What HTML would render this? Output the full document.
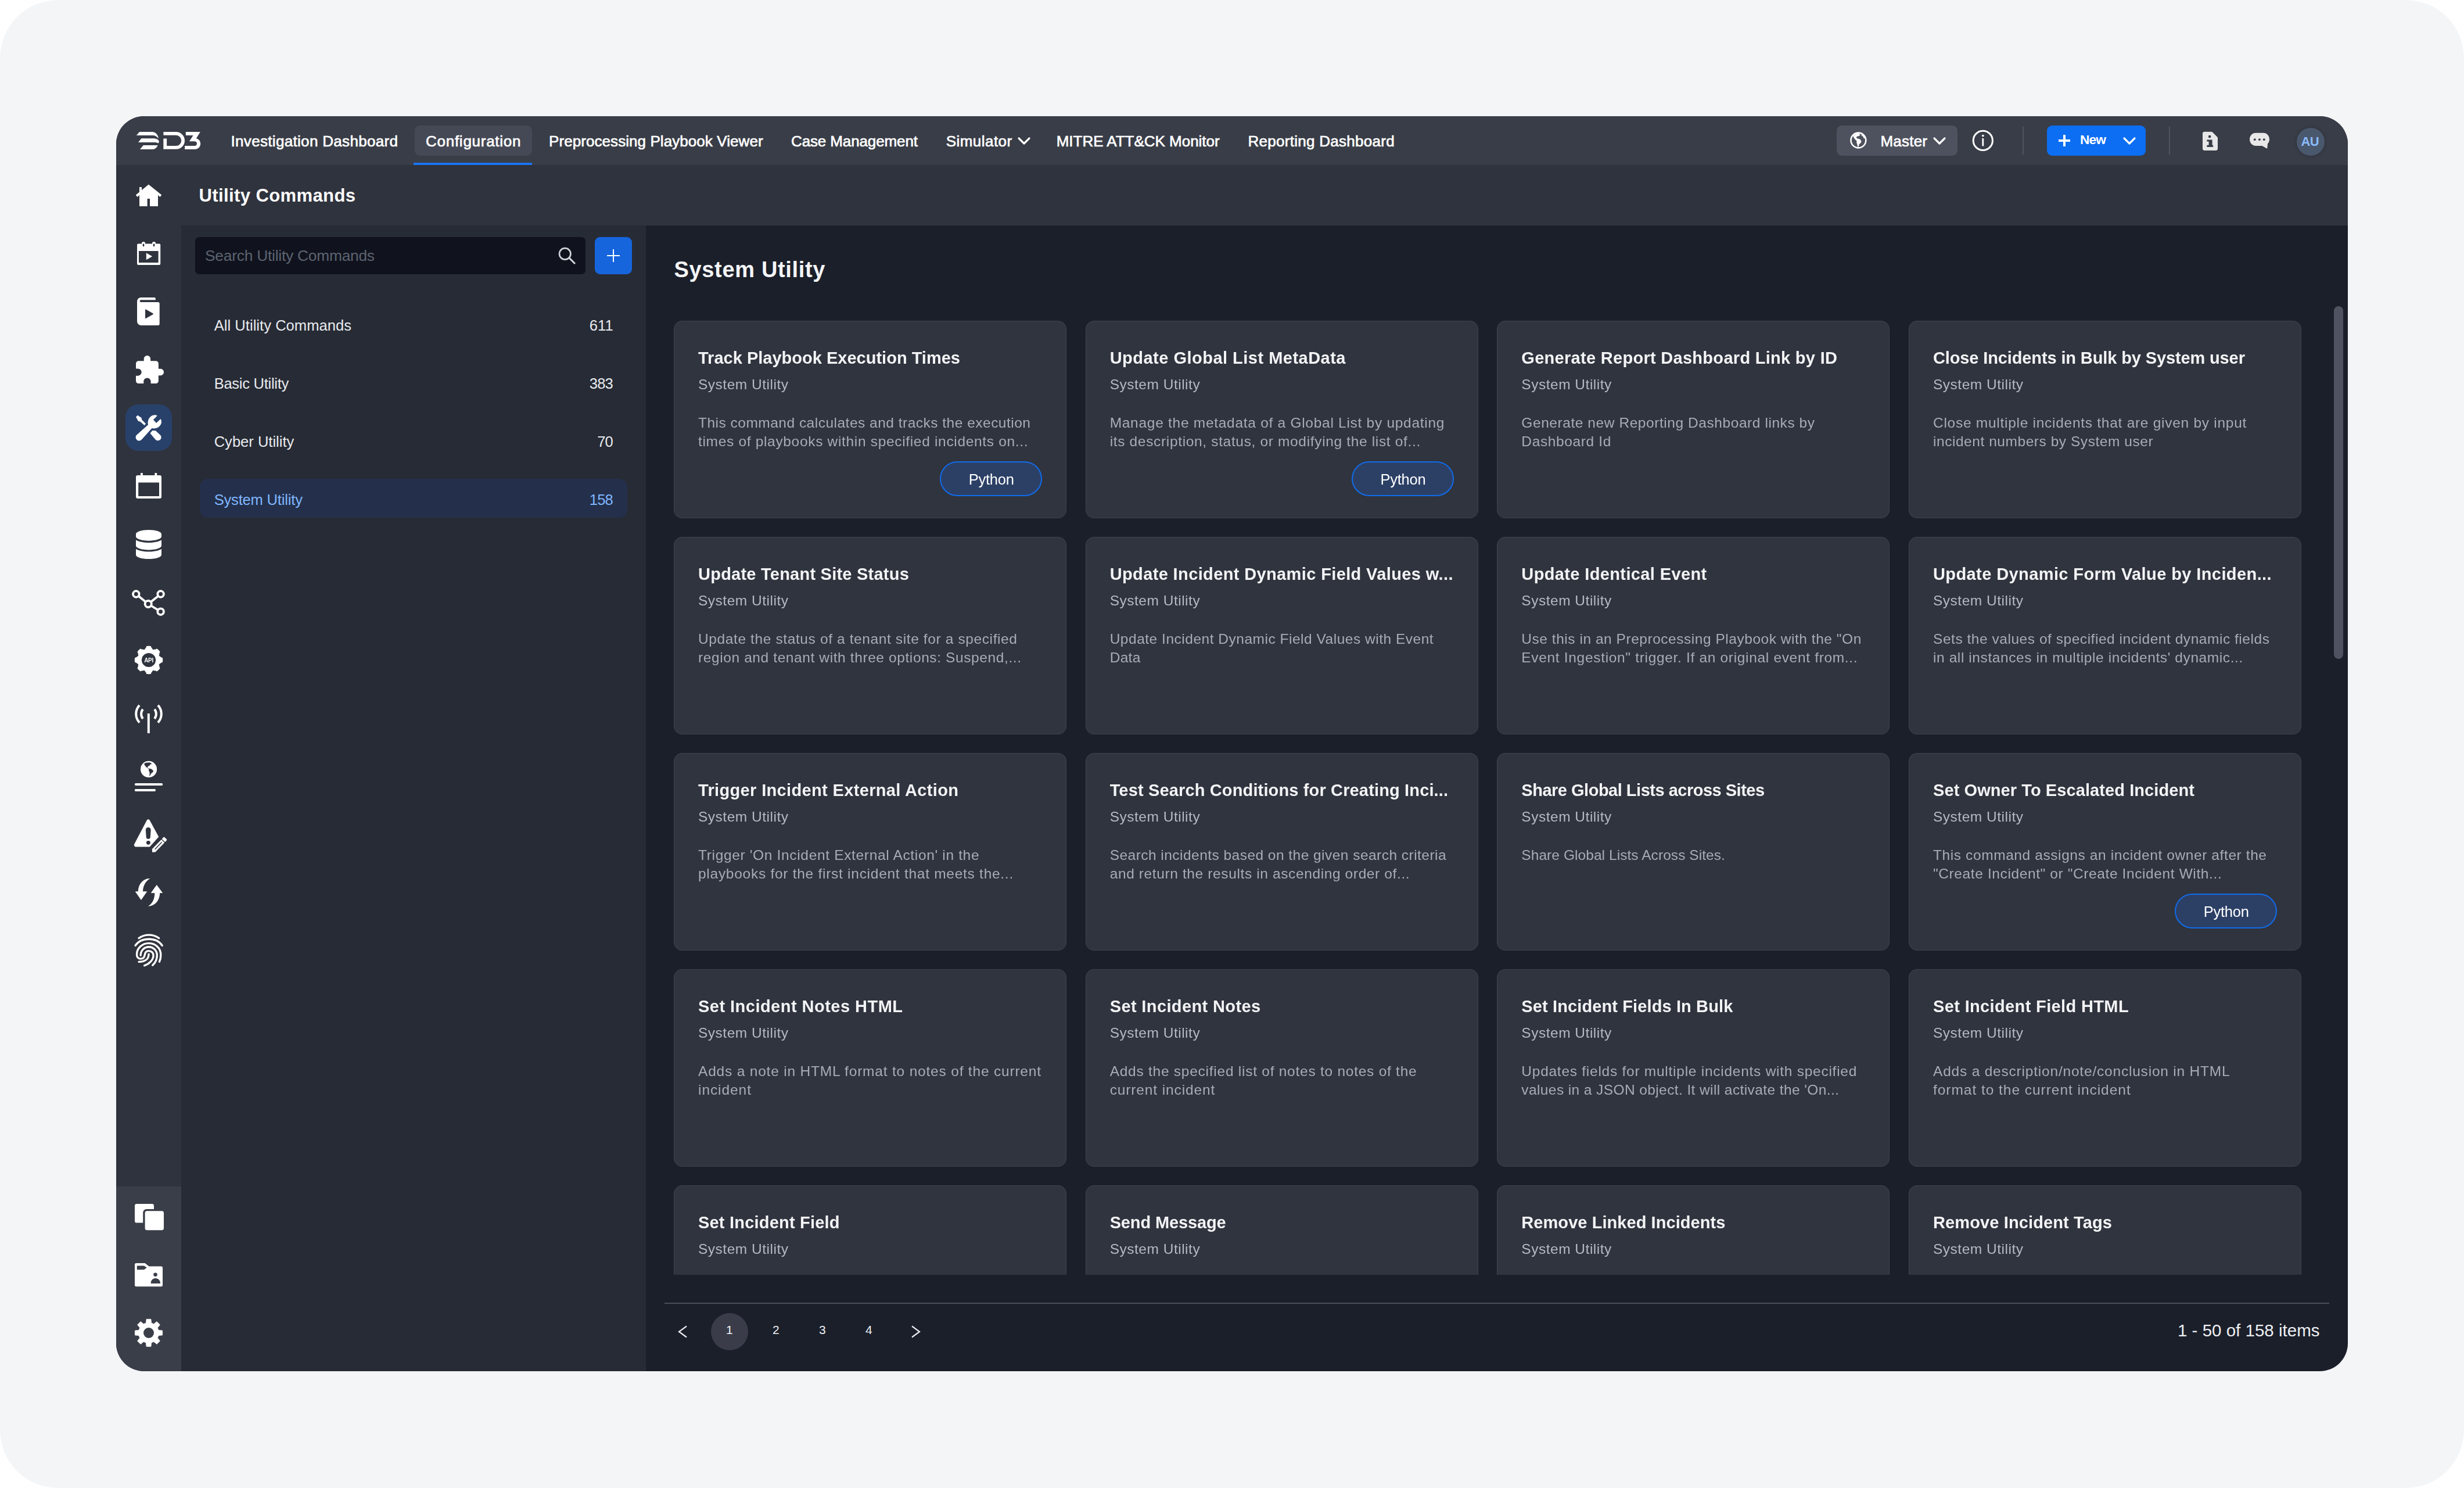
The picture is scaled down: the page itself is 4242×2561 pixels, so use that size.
<!DOCTYPE html>
<html lang="en"><head><meta charset="utf-8"><title>Utility Commands</title>
<style>
html,body{margin:0;padding:0;background:#fff;}
body{width:4242px;height:2561px;position:relative;overflow:hidden;font-family:"Liberation Sans", Arial, sans-serif;}
.page{position:absolute;left:0;top:0;width:4242px;height:2561px;background:#f4f5f7;border-radius:100px;}
.app{position:absolute;left:0;top:0;width:4242px;height:2561px;background:#1b1f2a;clip-path:inset(200px 200px 201px 200px round 48px);}
.blk{position:absolute;}
.t{position:absolute;white-space:nowrap;font-family:"Liberation Sans", Arial, sans-serif;}
.sb{-webkit-text-stroke:0.7px currentColor;}
.card{position:absolute;width:676px;height:340px;box-sizing:border-box;border:1.5px solid #3f434e;border-radius:14px;background:#30343e;}
</style></head><body>
<div class="page"></div>
<div class="app">
<div class="blk" style="left:200px;top:200px;width:3842px;height:84px;background:#393d47"></div>
<div class="blk" style="left:200px;top:284px;width:112px;height:1758px;background:#2f333d"></div>
<div class="blk" style="left:200px;top:2042px;width:112px;height:318px;background:#3a3e48"></div>
<div class="blk" style="left:312px;top:284px;width:3730px;height:104px;background:#2f333d"></div>
<div class="blk" style="left:312px;top:388px;width:800px;height:1972px;background:#272b35"></div>
<div class="blk" style="left:714px;top:216px;width:202px;height:52px;border-radius:9px;background:#454955"></div>
<div class="blk" style="left:712px;top:280px;width:204px;height:4px;background:#1a73f0"></div>
<div class="t sb" style="left:397.5px;top:226.99px;font-size:26px;line-height:32px;color:#ffffff;font-weight:normal;letter-spacing:0.322px;">Investigation Dashboard</div>
<div class="t sb" style="left:733px;top:226.99px;font-size:26px;line-height:32px;color:#ffffff;font-weight:normal;letter-spacing:0.737px;">Configuration</div>
<div class="t sb" style="left:945px;top:226.99px;font-size:26px;line-height:32px;color:#ffffff;font-weight:normal;letter-spacing:0.071px;">Preprocessing Playbook Viewer</div>
<div class="t sb" style="left:1362px;top:226.99px;font-size:26px;line-height:32px;color:#ffffff;font-weight:normal;letter-spacing:-0.121px;">Case Management</div>
<div class="t sb" style="left:1628.7px;top:226.99px;font-size:26px;line-height:32px;color:#ffffff;font-weight:normal;letter-spacing:0.459px;">Simulator</div>
<div class="t sb" style="left:1818.7px;top:226.99px;font-size:26px;line-height:32px;color:#ffffff;font-weight:normal;letter-spacing:-0.012px;">MITRE ATT&amp;CK Monitor</div>
<div class="t sb" style="left:2148.4px;top:226.99px;font-size:26px;line-height:32px;color:#ffffff;font-weight:normal;letter-spacing:0.286px;">Reporting Dashboard</div>
<svg class="blk" style="left:1750px;top:232px" width="26" height="20" viewBox="0 0 26 20"><path d="M4 6 L13 15 L22 6" fill="none" stroke="#fff" stroke-width="3.2" stroke-linecap="round" stroke-linejoin="round"/></svg>
<div class="blk" style="left:3162px;top:216px;width:208px;height:52px;border-radius:9px;background:#4e525e"></div>
<div class="t sb" style="left:3237.5px;top:226.99px;font-size:26px;line-height:32px;color:#ffffff;font-weight:normal;letter-spacing:0.206px;">Master</div>
<svg class="blk" style="left:3326px;top:232px" width="26" height="20" viewBox="0 0 26 20"><path d="M4 6 L13 15 L22 6" fill="none" stroke="#fff" stroke-width="3.2" stroke-linecap="round" stroke-linejoin="round"/></svg>
<div class="blk" style="left:3482px;top:218px;width:2px;height:48px;background:#50545f"></div>
<div class="blk" style="left:3734px;top:218px;width:2px;height:48px;background:#50545f"></div>
<div class="blk" style="left:3524px;top:216px;width:170px;height:52px;border-radius:9px;background:#0c6ef2"></div>
<div class="blk" style="left:3544px;top:240.3px;width:19.5px;height:3.6px;background:#fff"></div>
<div class="blk" style="left:3552px;top:232.3px;width:3.6px;height:19.6px;background:#fff"></div>
<div class="t " style="left:3581px;top:226.12px;font-size:22.75px;line-height:28px;color:#ffffff;font-weight:bold;letter-spacing:-0.891px;">New</div>
<svg class="blk" style="left:3653px;top:232px" width="26" height="20" viewBox="0 0 26 20"><path d="M4 6 L13 15 L22 6" fill="none" stroke="#fff" stroke-width="3.2" stroke-linecap="round" stroke-linejoin="round"/></svg>
<div class="blk" style="left:3954px;top:220px;width:48px;height:48px;border-radius:50%;background:#4a586e;box-shadow:0 0 7px rgba(0,0,0,0.22)"></div>
<div class="t " style="left:3961.6px;top:230.38px;font-size:22px;line-height:28px;color:#8bbdff;font-weight:bold;letter-spacing:-0.781px;">AU</div>
<div class="t " style="left:342.5px;top:317.26px;font-size:31px;line-height:39px;color:#ffffff;font-weight:bold;letter-spacing:0.398px;">Utility Commands</div>
<div class="blk" style="left:336px;top:408px;width:672px;height:64px;border-radius:7px;background:#10131e"></div>
<div class="t " style="left:353px;top:424.40px;font-size:26.25px;line-height:33px;color:#5d6370;font-weight:normal;letter-spacing:-0.188px;">Search Utility Commands</div>
<div class="blk" style="left:1024px;top:408px;width:64px;height:64px;border-radius:9px;background:#1665dd"></div>
<div class="blk" style="left:1045px;top:438.7px;width:22px;height:2.6px;background:#fff"></div>
<div class="blk" style="left:1054.7px;top:429px;width:2.6px;height:22px;background:#fff"></div>
<div class="blk" style="left:344px;top:824px;width:736px;height:67px;border-radius:14px;background:#24304b"></div>
<div class="t " style="left:368.7px;top:543.66px;font-size:25.5px;line-height:32px;color:#e9ebef;font-weight:normal;letter-spacing:0.052px;">All Utility Commands</div>
<div class="t " style="left:1014.8000000000001px;top:543.66px;font-size:25.5px;line-height:32px;color:#e9ebef;font-weight:normal;letter-spacing:0.122px;">611</div>
<div class="t " style="left:368.7px;top:643.66px;font-size:25.5px;line-height:32px;color:#e9ebef;font-weight:normal;letter-spacing:-0.265px;">Basic Utility</div>
<div class="t " style="left:1014.8000000000001px;top:643.66px;font-size:25.5px;line-height:32px;color:#e9ebef;font-weight:normal;letter-spacing:-0.823px;">383</div>
<div class="t " style="left:368.7px;top:743.66px;font-size:25.5px;line-height:32px;color:#e9ebef;font-weight:normal;letter-spacing:0.014px;">Cyber Utility</div>
<div class="t " style="left:1028.2px;top:743.66px;font-size:25.5px;line-height:32px;color:#e9ebef;font-weight:normal;letter-spacing:-0.875px;">70</div>
<div class="t " style="left:368.7px;top:843.66px;font-size:25.5px;line-height:32px;color:#7fb6ff;font-weight:normal;letter-spacing:-0.172px;">System Utility</div>
<div class="t " style="left:1014.8000000000001px;top:843.66px;font-size:25.5px;line-height:32px;color:#7fb6ff;font-weight:normal;letter-spacing:-0.823px;">158</div>
<div class="t " style="left:1160.5px;top:440.33px;font-size:38px;line-height:48px;color:#f4f5f7;font-weight:bold;letter-spacing:0.668px;">System Utility</div>
<div class="blk" style="left:1112px;top:520px;width:2930px;height:1674px;overflow:hidden;will-change:transform"><div style="position:absolute;left:-1112px;top:-520px;width:4242px;height:2561px">
<div class="card" style="left:1160.0px;top:552px"></div>
<div class="t ct" style="left:1202.0px;top:597.95px;font-size:29px;line-height:36px;color:#f3f4f6;font-weight:bold;letter-spacing:0.008px;">Track Playbook Execution Times</div>
<div class="t " style="left:1202.0px;top:645.51px;font-size:24.5px;line-height:31px;color:#b5b9c3;font-weight:normal;letter-spacing:0.508px;">System Utility</div>
<div class="t " style="left:1202.0px;top:712.01px;font-size:24.5px;line-height:31px;color:#a8acb7;font-weight:normal;letter-spacing:0.493px;">This command calculates and tracks the execution</div>
<div class="t " style="left:1202.0px;top:744.01px;font-size:24.5px;line-height:31px;color:#a8acb7;font-weight:normal;letter-spacing:0.675px;">times of playbooks within specified incidents on...</div>
<div class="blk" style="left:1618.0px;top:794px;width:176px;height:60px;border-radius:30px;background:#2c4066;border:2px solid #106cec;box-sizing:border-box"></div>
<div class="t " style="left:1667.8px;top:809.36px;font-size:25.5px;line-height:32px;color:#ffffff;font-weight:normal;letter-spacing:-0.258px;">Python</div>
<div class="card" style="left:1868.67px;top:552px"></div>
<div class="t ct" style="left:1910.67px;top:597.95px;font-size:29px;line-height:36px;color:#f3f4f6;font-weight:bold;letter-spacing:0.486px;">Update Global List MetaData</div>
<div class="t " style="left:1910.67px;top:645.51px;font-size:24.5px;line-height:31px;color:#b5b9c3;font-weight:normal;letter-spacing:0.508px;">System Utility</div>
<div class="t " style="left:1910.67px;top:712.01px;font-size:24.5px;line-height:31px;color:#a8acb7;font-weight:normal;letter-spacing:0.717px;">Manage the metadata of a Global List by updating</div>
<div class="t " style="left:1910.67px;top:744.01px;font-size:24.5px;line-height:31px;color:#a8acb7;font-weight:normal;letter-spacing:0.657px;">its description, status, or modifying the list of...</div>
<div class="blk" style="left:2326.67px;top:794px;width:176px;height:60px;border-radius:30px;background:#2c4066;border:2px solid #106cec;box-sizing:border-box"></div>
<div class="t " style="left:2376.4700000000003px;top:809.36px;font-size:25.5px;line-height:32px;color:#ffffff;font-weight:normal;letter-spacing:-0.258px;">Python</div>
<div class="card" style="left:2577.34px;top:552px"></div>
<div class="t ct" style="left:2619.34px;top:597.95px;font-size:29px;line-height:36px;color:#f3f4f6;font-weight:bold;letter-spacing:0.292px;">Generate Report Dashboard Link by ID</div>
<div class="t " style="left:2619.34px;top:645.51px;font-size:24.5px;line-height:31px;color:#b5b9c3;font-weight:normal;letter-spacing:0.508px;">System Utility</div>
<div class="t " style="left:2619.34px;top:712.01px;font-size:24.5px;line-height:31px;color:#a8acb7;font-weight:normal;letter-spacing:0.565px;">Generate new Reporting Dashboard links by</div>
<div class="t " style="left:2619.34px;top:744.01px;font-size:24.5px;line-height:31px;color:#a8acb7;font-weight:normal;letter-spacing:0.626px;">Dashboard Id</div>
<div class="card" style="left:3286.0099999999998px;top:552px"></div>
<div class="t ct" style="left:3328.0099999999998px;top:597.95px;font-size:29px;line-height:36px;color:#f3f4f6;font-weight:bold;letter-spacing:-0.124px;">Close Incidents in Bulk by System user</div>
<div class="t " style="left:3328.0099999999998px;top:645.51px;font-size:24.5px;line-height:31px;color:#b5b9c3;font-weight:normal;letter-spacing:0.508px;">System Utility</div>
<div class="t " style="left:3328.0099999999998px;top:712.01px;font-size:24.5px;line-height:31px;color:#a8acb7;font-weight:normal;letter-spacing:0.726px;">Close multiple incidents that are given by input</div>
<div class="t " style="left:3328.0099999999998px;top:744.01px;font-size:24.5px;line-height:31px;color:#a8acb7;font-weight:normal;letter-spacing:0.546px;">incident numbers by System user</div>
<div class="card" style="left:1160.0px;top:924px"></div>
<div class="t ct" style="left:1202.0px;top:969.95px;font-size:29px;line-height:36px;color:#f3f4f6;font-weight:bold;letter-spacing:0.234px;">Update Tenant Site Status</div>
<div class="t " style="left:1202.0px;top:1017.51px;font-size:24.5px;line-height:31px;color:#b5b9c3;font-weight:normal;letter-spacing:0.508px;">System Utility</div>
<div class="t " style="left:1202.0px;top:1084.01px;font-size:24.5px;line-height:31px;color:#a8acb7;font-weight:normal;letter-spacing:0.614px;">Update the status of a tenant site for a specified</div>
<div class="t " style="left:1202.0px;top:1116.01px;font-size:24.5px;line-height:31px;color:#a8acb7;font-weight:normal;letter-spacing:0.602px;">region and tenant with three options: Suspend,...</div>
<div class="card" style="left:1868.67px;top:924px"></div>
<div class="t ct" style="left:1910.67px;top:969.95px;font-size:29px;line-height:36px;color:#f3f4f6;font-weight:bold;letter-spacing:0.374px;">Update Incident Dynamic Field Values w...</div>
<div class="t " style="left:1910.67px;top:1017.51px;font-size:24.5px;line-height:31px;color:#b5b9c3;font-weight:normal;letter-spacing:0.508px;">System Utility</div>
<div class="t " style="left:1910.67px;top:1084.01px;font-size:24.5px;line-height:31px;color:#a8acb7;font-weight:normal;letter-spacing:0.514px;">Update Incident Dynamic Field Values with Event</div>
<div class="t " style="left:1910.67px;top:1116.01px;font-size:24.5px;line-height:31px;color:#a8acb7;font-weight:normal;letter-spacing:0.311px;">Data</div>
<div class="card" style="left:2577.34px;top:924px"></div>
<div class="t ct" style="left:2619.34px;top:969.95px;font-size:29px;line-height:36px;color:#f3f4f6;font-weight:bold;letter-spacing:0.371px;">Update Identical Event</div>
<div class="t " style="left:2619.34px;top:1017.51px;font-size:24.5px;line-height:31px;color:#b5b9c3;font-weight:normal;letter-spacing:0.508px;">System Utility</div>
<div class="t " style="left:2619.34px;top:1084.01px;font-size:24.5px;line-height:31px;color:#a8acb7;font-weight:normal;letter-spacing:0.533px;">Use this in an Preprocessing Playbook with the "On</div>
<div class="t " style="left:2619.34px;top:1116.01px;font-size:24.5px;line-height:31px;color:#a8acb7;font-weight:normal;letter-spacing:0.675px;">Event Ingestion" trigger. If an original event from...</div>
<div class="card" style="left:3286.0099999999998px;top:924px"></div>
<div class="t ct" style="left:3328.0099999999998px;top:969.95px;font-size:29px;line-height:36px;color:#f3f4f6;font-weight:bold;letter-spacing:0.404px;">Update Dynamic Form Value by Inciden...</div>
<div class="t " style="left:3328.0099999999998px;top:1017.51px;font-size:24.5px;line-height:31px;color:#b5b9c3;font-weight:normal;letter-spacing:0.508px;">System Utility</div>
<div class="t " style="left:3328.0099999999998px;top:1084.01px;font-size:24.5px;line-height:31px;color:#a8acb7;font-weight:normal;letter-spacing:0.536px;">Sets the values of specified incident dynamic fields</div>
<div class="t " style="left:3328.0099999999998px;top:1116.01px;font-size:24.5px;line-height:31px;color:#a8acb7;font-weight:normal;letter-spacing:0.589px;">in all instances in multiple incidents' dynamic...</div>
<div class="card" style="left:1160.0px;top:1296px"></div>
<div class="t ct" style="left:1202.0px;top:1341.95px;font-size:29px;line-height:36px;color:#f3f4f6;font-weight:bold;letter-spacing:0.347px;">Trigger Incident External Action</div>
<div class="t " style="left:1202.0px;top:1389.51px;font-size:24.5px;line-height:31px;color:#b5b9c3;font-weight:normal;letter-spacing:0.508px;">System Utility</div>
<div class="t " style="left:1202.0px;top:1456.01px;font-size:24.5px;line-height:31px;color:#a8acb7;font-weight:normal;letter-spacing:0.660px;">Trigger 'On Incident External Action' in the</div>
<div class="t " style="left:1202.0px;top:1488.01px;font-size:24.5px;line-height:31px;color:#a8acb7;font-weight:normal;letter-spacing:0.727px;">playbooks for the first incident that meets the...</div>
<div class="card" style="left:1868.67px;top:1296px"></div>
<div class="t ct" style="left:1910.67px;top:1341.95px;font-size:29px;line-height:36px;color:#f3f4f6;font-weight:bold;letter-spacing:0.145px;">Test Search Conditions for Creating Inci...</div>
<div class="t " style="left:1910.67px;top:1389.51px;font-size:24.5px;line-height:31px;color:#b5b9c3;font-weight:normal;letter-spacing:0.508px;">System Utility</div>
<div class="t " style="left:1910.67px;top:1456.01px;font-size:24.5px;line-height:31px;color:#a8acb7;font-weight:normal;letter-spacing:0.465px;">Search incidents based on the given search criteria</div>
<div class="t " style="left:1910.67px;top:1488.01px;font-size:24.5px;line-height:31px;color:#a8acb7;font-weight:normal;letter-spacing:0.618px;">and return the results in ascending order of...</div>
<div class="card" style="left:2577.34px;top:1296px"></div>
<div class="t ct" style="left:2619.34px;top:1341.95px;font-size:29px;line-height:36px;color:#f3f4f6;font-weight:bold;letter-spacing:-0.493px;">Share Global Lists across Sites</div>
<div class="t " style="left:2619.34px;top:1389.51px;font-size:24.5px;line-height:31px;color:#b5b9c3;font-weight:normal;letter-spacing:0.508px;">System Utility</div>
<div class="t " style="left:2619.34px;top:1456.01px;font-size:24.5px;line-height:31px;color:#a8acb7;font-weight:normal;letter-spacing:0.064px;">Share Global Lists Across Sites.</div>
<div class="card" style="left:3286.0099999999998px;top:1296px"></div>
<div class="t ct" style="left:3328.0099999999998px;top:1341.95px;font-size:29px;line-height:36px;color:#f3f4f6;font-weight:bold;letter-spacing:0.081px;">Set Owner To Escalated Incident</div>
<div class="t " style="left:3328.0099999999998px;top:1389.51px;font-size:24.5px;line-height:31px;color:#b5b9c3;font-weight:normal;letter-spacing:0.508px;">System Utility</div>
<div class="t " style="left:3328.0099999999998px;top:1456.01px;font-size:24.5px;line-height:31px;color:#a8acb7;font-weight:normal;letter-spacing:0.594px;">This command assigns an incident owner after the</div>
<div class="t " style="left:3328.0099999999998px;top:1488.01px;font-size:24.5px;line-height:31px;color:#a8acb7;font-weight:normal;letter-spacing:0.606px;">"Create Incident" or "Create Incident With...</div>
<div class="blk" style="left:3744.0099999999998px;top:1538px;width:176px;height:60px;border-radius:30px;background:#2c4066;border:2px solid #106cec;box-sizing:border-box"></div>
<div class="t " style="left:3793.81px;top:1553.36px;font-size:25.5px;line-height:32px;color:#ffffff;font-weight:normal;letter-spacing:-0.258px;">Python</div>
<div class="card" style="left:1160.0px;top:1668px"></div>
<div class="t ct" style="left:1202.0px;top:1713.95px;font-size:29px;line-height:36px;color:#f3f4f6;font-weight:bold;letter-spacing:0.474px;">Set Incident Notes HTML</div>
<div class="t " style="left:1202.0px;top:1761.51px;font-size:24.5px;line-height:31px;color:#b5b9c3;font-weight:normal;letter-spacing:0.508px;">System Utility</div>
<div class="t " style="left:1202.0px;top:1828.01px;font-size:24.5px;line-height:31px;color:#a8acb7;font-weight:normal;letter-spacing:0.804px;">Adds a note in HTML format to notes of the current</div>
<div class="t " style="left:1202.0px;top:1860.01px;font-size:24.5px;line-height:31px;color:#a8acb7;font-weight:normal;letter-spacing:0.935px;">incident</div>
<div class="card" style="left:1868.67px;top:1668px"></div>
<div class="t ct" style="left:1910.67px;top:1713.95px;font-size:29px;line-height:36px;color:#f3f4f6;font-weight:bold;letter-spacing:0.382px;">Set Incident Notes</div>
<div class="t " style="left:1910.67px;top:1761.51px;font-size:24.5px;line-height:31px;color:#b5b9c3;font-weight:normal;letter-spacing:0.508px;">System Utility</div>
<div class="t " style="left:1910.67px;top:1828.01px;font-size:24.5px;line-height:31px;color:#a8acb7;font-weight:normal;letter-spacing:0.744px;">Adds the specified list of notes to notes of the</div>
<div class="t " style="left:1910.67px;top:1860.01px;font-size:24.5px;line-height:31px;color:#a8acb7;font-weight:normal;letter-spacing:0.879px;">current incident</div>
<div class="card" style="left:2577.34px;top:1668px"></div>
<div class="t ct" style="left:2619.34px;top:1713.95px;font-size:29px;line-height:36px;color:#f3f4f6;font-weight:bold;letter-spacing:0.117px;">Set Incident Fields In Bulk</div>
<div class="t " style="left:2619.34px;top:1761.51px;font-size:24.5px;line-height:31px;color:#b5b9c3;font-weight:normal;letter-spacing:0.508px;">System Utility</div>
<div class="t " style="left:2619.34px;top:1828.01px;font-size:24.5px;line-height:31px;color:#a8acb7;font-weight:normal;letter-spacing:0.740px;">Updates fields for multiple incidents with specified</div>
<div class="t " style="left:2619.34px;top:1860.01px;font-size:24.5px;line-height:31px;color:#a8acb7;font-weight:normal;letter-spacing:0.400px;">values in a JSON object. It will activate the 'On...</div>
<div class="card" style="left:3286.0099999999998px;top:1668px"></div>
<div class="t ct" style="left:3328.0099999999998px;top:1713.95px;font-size:29px;line-height:36px;color:#f3f4f6;font-weight:bold;letter-spacing:0.360px;">Set Incident Field HTML</div>
<div class="t " style="left:3328.0099999999998px;top:1761.51px;font-size:24.5px;line-height:31px;color:#b5b9c3;font-weight:normal;letter-spacing:0.508px;">System Utility</div>
<div class="t " style="left:3328.0099999999998px;top:1828.01px;font-size:24.5px;line-height:31px;color:#a8acb7;font-weight:normal;letter-spacing:0.797px;">Adds a description/note/conclusion in HTML</div>
<div class="t " style="left:3328.0099999999998px;top:1860.01px;font-size:24.5px;line-height:31px;color:#a8acb7;font-weight:normal;letter-spacing:0.960px;">format to the current incident</div>
<div class="card" style="left:1160.0px;top:2040px"></div>
<div class="t ct" style="left:1202.0px;top:2085.95px;font-size:29px;line-height:36px;color:#f3f4f6;font-weight:bold;letter-spacing:0.200px;">Set Incident Field</div>
<div class="t " style="left:1202.0px;top:2133.51px;font-size:24.5px;line-height:31px;color:#b5b9c3;font-weight:normal;letter-spacing:0.508px;">System Utility</div>
<div class="card" style="left:1868.67px;top:2040px"></div>
<div class="t ct" style="left:1910.67px;top:2085.95px;font-size:29px;line-height:36px;color:#f3f4f6;font-weight:bold;letter-spacing:-0.135px;">Send Message</div>
<div class="t " style="left:1910.67px;top:2133.51px;font-size:24.5px;line-height:31px;color:#b5b9c3;font-weight:normal;letter-spacing:0.508px;">System Utility</div>
<div class="card" style="left:2577.34px;top:2040px"></div>
<div class="t ct" style="left:2619.34px;top:2085.95px;font-size:29px;line-height:36px;color:#f3f4f6;font-weight:bold;letter-spacing:0.059px;">Remove Linked Incidents</div>
<div class="t " style="left:2619.34px;top:2133.51px;font-size:24.5px;line-height:31px;color:#b5b9c3;font-weight:normal;letter-spacing:0.508px;">System Utility</div>
<div class="card" style="left:3286.0099999999998px;top:2040px"></div>
<div class="t ct" style="left:3328.0099999999998px;top:2085.95px;font-size:29px;line-height:36px;color:#f3f4f6;font-weight:bold;letter-spacing:0.123px;">Remove Incident Tags</div>
<div class="t " style="left:3328.0099999999998px;top:2133.51px;font-size:24.5px;line-height:31px;color:#b5b9c3;font-weight:normal;letter-spacing:0.508px;">System Utility</div>
</div></div>
<div class="blk" style="left:4018px;top:527px;width:16px;height:607px;border-radius:8px;background:#4f5361"></div>
<div class="blk" style="left:1144px;top:2242px;width:2866px;height:2px;background:#4a4e5b"></div>
<div class="blk" style="left:1224px;top:2259.5px;width:64px;height:64px;border-radius:50%;background:#3a3d49"></div>
<div class="t " style="left:1250px;top:2275.72px;font-size:21px;line-height:26px;color:#f0f1f4;font-weight:normal;letter-spacing:0px;">1</div>
<div class="t " style="left:1330px;top:2275.72px;font-size:21px;line-height:26px;color:#f0f1f4;font-weight:normal;letter-spacing:0px;">2</div>
<div class="t " style="left:1410px;top:2275.72px;font-size:21px;line-height:26px;color:#f0f1f4;font-weight:normal;letter-spacing:0px;">3</div>
<div class="t " style="left:1490px;top:2275.72px;font-size:21px;line-height:26px;color:#f0f1f4;font-weight:normal;letter-spacing:0px;">4</div>
<svg class="blk" style="left:1160px;top:2276px" width="32" height="32" viewBox="0 0 32 32"><path d="M22 6.5 L9 16 L22 25.5" fill="none" stroke="#e9ebef" stroke-width="2.2" stroke-linejoin="miter"/></svg>
<svg class="blk" style="left:1560px;top:2276px" width="32" height="32" viewBox="0 0 32 32"><path d="M10 6.5 L23 16 L10 25.5" fill="none" stroke="#e9ebef" stroke-width="2.2" stroke-linejoin="miter"/></svg>
<div class="t " style="left:3749px;top:2271.28px;font-size:29.5px;line-height:37px;color:#eef0f3;font-weight:normal;letter-spacing:0.010px;">1 - 50 of 158 items</div>
<svg class="blk" style="left:0;top:0" width="4242" height="2561" viewBox="0 0 4242 2561">
<g transform="translate(220,210) scale(0.06088)" fill="#ffffff">
<path d="M245,378 L330,278 L690,278 C790,278 860,370 872,470 C830,410 770,378 700,378 Z"/>
<path d="M295,575 L385,465 L720,465 C800,465 870,500 882,540 C882,565 875,585 865,600 C840,585 800,575 760,575 Z"/>
<path d="M345,772 L440,655 L848,655 C820,720 770,772 690,772 Z"/>
<path d="M1008,328 H1365 A197,197 0 0 1 1365,722 H1055 V470" fill="none" stroke="#ffffff" stroke-width="95"/>
<path d="M1640,278 L2050,278 L1935,462 C2010,480 2056,540 2056,612 C2056,700 1990,772 1890,772 L1612,772 L1612,675 L1880,675 C1925,675 1955,648 1955,610 C1955,572 1925,545 1880,545 L1740,545 L1850,378 L1640,378 Z"/>
</g>
<path fill="#ffffff" d="M255.8,317.4 L278.2,335.6 L275.6,339 L272,336.1 V355 H258 V342 H253.6 V355 H240 V336.1 L236.4,339 L233.8,335.6 L240,330.5 V322 H244 V327.2 Z"/>
<rect x="236" y="419.4" width="40.2" height="36.6" rx="2" fill="#ffffff"/>
<rect x="244" y="416" width="6" height="10" rx="3" fill="#ffffff"/><rect x="262" y="416" width="6" height="10" rx="3" fill="#ffffff"/>
<rect x="245.7" y="419.6" width="2.6" height="4.6" rx="1.3" fill="#2f333d"/><rect x="263.7" y="419.6" width="2.6" height="4.6" rx="1.3" fill="#2f333d"/>
<rect x="239" y="432" width="33.6" height="20" fill="#2f333d"/>
<path fill="#ffffff" d="M251.8,435.2 L262.2,441.2 L251.8,447.2Z"/>
<path fill="#ffffff" d="M242.5,512 H266 a1.8,1.8 0 0 1 1.8,1.8 V516.2 H242.5 a1.9,1.9 0 0 0 0,3.8 H272 a2.7,2.7 0 0 1 2.7,2.7 V557.3 a2.7,2.7 0 0 1 -2.7,2.7 H243 a7,7 0 0 1 -7,-7 V518.5 a6.5,6.5 0 0 1 6.5,-6.5Z"/>
<path fill="#2f333d" stroke="#2f333d" stroke-width="1.6" stroke-linejoin="round" d="M250.8,533.3 L263.2,540.3 L250.8,547.3Z"/>
<g transform="translate(229.43,609.71) scale(2.2857)"><path fill="#ffffff" d="M20.5 11H19V7c0-1.1-.9-2-2-2h-4V3.5C13 2.12 11.88 1 10.5 1S8 2.12 8 3.5V5H4c-1.1 0-1.99.9-1.99 2v3.8H3.5c1.49 0 2.7 1.21 2.7 2.7s-1.21 2.7-2.7 2.7H2V20c0 1.1.9 2 2 2h3.8v-1.5c0-1.49 1.21-2.7 2.7-2.7 1.49 0 2.7 1.21 2.7 2.7V22H17c1.1 0 2-.9 2-2v-4h1.5c1.38 0 2.5-1.12 2.5-2.5S21.88 11 20.5 11z"/></g>
<rect x="216" y="696" width="80" height="80" rx="22" fill="#28416b"/>
<g transform="translate(226,706) scale(0.040323)" fill="#ffffff">
<path d="M1110,235 L940,410 L1070,545 L1255,375 C1310,480 1300,600 1200,690 C1110,775 980,800 880,770 L440,1260 C380,1320 280,1320 225,1250 C170,1180 180,1100 240,1050 L720,620 C690,500 720,370 820,280 C900,205 1020,180 1110,235 Z"/>
<path d="M198,288 L272,220 L440,330 L447,400 L622,578 L560,645 L378,482 L300,470 Z"/>
<path d="M900,870 L1040,875 L1240,1060 C1300,1130 1290,1220 1220,1270 C1150,1320 1070,1300 1020,1240 L805,985 Z"/>
</g>
<rect x="234" y="818" width="44" height="40" rx="3" fill="#ffffff"/>
<rect x="242" y="814" width="3.8" height="6" fill="#ffffff"/><rect x="266.4" y="814" width="3.8" height="6" fill="#ffffff"/>
<rect x="238.2" y="830.5" width="35.8" height="23.5" fill="#2f333d"/>
<g transform="translate(234,912) scale(0.0982,0.0977)"><path fill="#ffffff" d="M448 73.143v45.714C448 159.143 347.667 192 224 192S0 159.143 0 118.857V73.143C0 32.857 100.333 0 224 0s224 32.857 224 73.143zM448 176v102.857C448 319.143 347.667 352 224 352S0 319.143 0 278.857V176c48.125 33.143 136.208 48.572 224 48.572S399.874 209.143 448 176zm0 160v102.857C448 479.143 347.667 512 224 512S0 479.143 0 438.857V336c48.125 33.143 136.208 48.572 224 48.572S399.874 369.143 448 336z"/></g>
<g stroke="#ffffff" stroke-width="3.8" fill="#2f333d"><path d="M234.3,1022.5 L255.2,1039.5 L276.6,1022.5 M255.2,1039.5 L276.6,1052.7" fill="none"/><circle cx="234.3" cy="1022.5" r="5.3"/><circle cx="276.6" cy="1022.5" r="5.3"/><circle cx="255.2" cy="1039.5" r="5.6"/><circle cx="276.6" cy="1052.7" r="5.3"/></g>
<path fill="#ffffff" d="M248.58,1118.08 L249.03,1117.75 L249.42,1117.20 L249.79,1116.53 L250.19,1115.84 L250.66,1115.28 L251.20,1114.95 L251.59,1113.82 L251.99,1112.42 L252.62,1112.04 L253.29,1111.95 L253.97,1111.89 L254.64,1111.84 L255.32,1111.81 L256.00,1111.80 L256.68,1111.81 L257.36,1111.84 L258.03,1111.89 L258.71,1111.95 L259.38,1112.04 L260.01,1112.42 L260.41,1113.82 L260.80,1114.95 L261.34,1115.28 L261.81,1115.84 L262.21,1116.53 L262.58,1117.20 L262.97,1117.75 L263.42,1118.08 L263.98,1118.17 L264.64,1118.06 L265.38,1117.84 L266.15,1117.64 L266.87,1117.57 L267.49,1117.72 L268.56,1117.20 L269.84,1116.49 L270.55,1116.66 L271.09,1117.08 L271.61,1117.51 L272.13,1117.96 L272.63,1118.41 L273.11,1118.89 L273.59,1119.37 L274.04,1119.87 L274.49,1120.39 L274.92,1120.91 L275.34,1121.45 L275.51,1122.16 L274.80,1123.44 L274.28,1124.51 L274.43,1125.13 L274.36,1125.85 L274.16,1126.62 L273.94,1127.36 L273.83,1128.02 L273.92,1128.58 L274.25,1129.03 L274.80,1129.42 L275.47,1129.79 L276.16,1130.19 L276.72,1130.66 L277.05,1131.20 L278.18,1131.59 L279.58,1131.99 L279.96,1132.62 L280.05,1133.29 L280.11,1133.97 L280.16,1134.64 L280.19,1135.32 L280.20,1136.00 L280.19,1136.68 L280.16,1137.36 L280.11,1138.03 L280.05,1138.71 L279.96,1139.38 L279.58,1140.01 L278.18,1140.41 L277.05,1140.80 L276.72,1141.34 L276.16,1141.81 L275.47,1142.21 L274.80,1142.58 L274.25,1142.97 L273.92,1143.42 L273.83,1143.98 L273.94,1144.64 L274.16,1145.38 L274.36,1146.15 L274.43,1146.87 L274.28,1147.49 L274.80,1148.56 L275.51,1149.84 L275.34,1150.55 L274.92,1151.09 L274.49,1151.61 L274.04,1152.13 L273.59,1152.63 L273.11,1153.11 L272.63,1153.59 L272.13,1154.04 L271.61,1154.49 L271.09,1154.92 L270.55,1155.34 L269.84,1155.51 L268.56,1154.80 L267.49,1154.28 L266.87,1154.43 L266.15,1154.36 L265.38,1154.16 L264.64,1153.94 L263.98,1153.83 L263.42,1153.92 L262.97,1154.25 L262.58,1154.80 L262.21,1155.47 L261.81,1156.16 L261.34,1156.72 L260.80,1157.05 L260.41,1158.18 L260.01,1159.58 L259.38,1159.96 L258.71,1160.05 L258.03,1160.11 L257.36,1160.16 L256.68,1160.19 L256.00,1160.20 L255.32,1160.19 L254.64,1160.16 L253.97,1160.11 L253.29,1160.05 L252.62,1159.96 L251.99,1159.58 L251.59,1158.18 L251.20,1157.05 L250.66,1156.72 L250.19,1156.16 L249.79,1155.47 L249.42,1154.80 L249.03,1154.25 L248.58,1153.92 L248.02,1153.83 L247.36,1153.94 L246.62,1154.16 L245.85,1154.36 L245.13,1154.43 L244.51,1154.28 L243.44,1154.80 L242.16,1155.51 L241.45,1155.34 L240.91,1154.92 L240.39,1154.49 L239.87,1154.04 L239.37,1153.59 L238.89,1153.11 L238.41,1152.63 L237.96,1152.13 L237.51,1151.61 L237.08,1151.09 L236.66,1150.55 L236.49,1149.84 L237.20,1148.56 L237.72,1147.49 L237.57,1146.87 L237.64,1146.15 L237.84,1145.38 L238.06,1144.64 L238.17,1143.98 L238.08,1143.42 L237.75,1142.97 L237.20,1142.58 L236.53,1142.21 L235.84,1141.81 L235.28,1141.34 L234.95,1140.80 L233.82,1140.41 L232.42,1140.01 L232.04,1139.38 L231.95,1138.71 L231.89,1138.03 L231.84,1137.36 L231.81,1136.68 L231.80,1136.00 L231.81,1135.32 L231.84,1134.64 L231.89,1133.97 L231.95,1133.29 L232.04,1132.62 L232.42,1131.99 L233.82,1131.59 L234.95,1131.20 L235.28,1130.66 L235.84,1130.19 L236.53,1129.79 L237.20,1129.42 L237.75,1129.03 L238.08,1128.58 L238.17,1128.02 L238.06,1127.36 L237.84,1126.62 L237.64,1125.85 L237.57,1125.13 L237.72,1124.51 L237.20,1123.44 L236.49,1122.16 L236.66,1121.45 L237.08,1120.91 L237.51,1120.39 L237.96,1119.87 L238.41,1119.37 L238.89,1118.89 L239.37,1118.41 L239.87,1117.96 L240.39,1117.51 L240.91,1117.08 L241.45,1116.66 L242.16,1116.49 L243.44,1117.20 L244.51,1117.72 L245.13,1117.57 L245.85,1117.64 L246.62,1117.84 L247.36,1118.06 L248.02,1118.17Z"/>
<circle cx="256" cy="1136" r="12.1" fill="#2f333d"/>
<text x="256.1" y="1139.8" text-anchor="middle" font-family="Liberation Sans, Arial, sans-serif" font-weight="bold" font-size="10" letter-spacing="-0.25" fill="#ffffff">API</text>
<g fill="none" stroke="#ffffff" stroke-width="4"><path d="M240.06,1243.67 A21.8,21.8 0 0 1 240.06,1213.93"/><path d="M271.94,1213.93 A21.8,21.8 0 0 1 271.94,1243.67"/><path d="M245.97,1236.92 A12.9,12.9 0 0 1 245.97,1220.68"/><path d="M266.03,1220.68 A12.9,12.9 0 0 1 266.03,1236.92"/><path d="M255.8,1228 V1262"/></g>
<circle cx="256.04" cy="1323.96" r="14.1" fill="#ffffff"/>
<g transform="translate(226,1304) scale(0.040323)" fill="#2f333d">
<path d="M545,265 C570,235 600,220 625,214 L760,205 C800,210 830,220 852,236 L866,292 L822,274 L792,330 L742,355 L702,385 L694,428 L760,468 L842,480 L915,530 L941,575 L926,620 L872,650 L836,700 L796,776 L770,770 L790,682 L776,620 L746,552 L752,486 L690,440 L655,416 L590,345 Z"/>
</g>
<rect x="231.8" y="1348" width="48.4" height="4" rx="2" fill="#ffffff"/><rect x="231.8" y="1358" width="36.3" height="4" rx="2" fill="#ffffff"/>
<g transform="translate(226,1406) scale(0.044355)">
<path fill="#ffffff" d="M598,142 C628,82 692,82 722,142 L1065,770 L715,1160 L190,1160 C118,1160 88,1098 124,1040 Z"/>
<path fill="#2f333d" d="M560,500 C560,372 760,372 760,500 L740,790 C735,882 585,882 580,790 Z"/>
<circle cx="662" cy="1000" r="78" fill="#2f333d"/>
<g transform="translate(812,1368) rotate(-46)">
<path fill="#ffffff" d="M0,0 L86,-86 H600 V86 H86 Z"/>
<path fill="#ffffff" d="M630,-86 H720 a30,30 0 0 1 30,30 V56 a30,30 0 0 1 -30,30 H630 Z"/>
<rect x="150" y="-17" width="395" height="34" rx="17" fill="#2f333d"/>
</g></g>
<g transform="translate(226,1506) scale(0.040323)" fill="#ffffff" stroke="#ffffff" stroke-width="24" stroke-linejoin="round">
<path d="M185,712 L655,712 L420,1052 Z"/>
<path d="M855,758 L1325,758 L1085,436 Z"/>
<path stroke="none" d="M800,150 C560,140 300,340 295,705 L495,705 C500,450 620,260 800,150 Z"/>
<path stroke="none" d="M710,1335 C1000,1330 1215,1100 1220,765 L1000,765 C1000,1050 880,1250 710,1335 Z"/>
</g>
<g transform="translate(226,1606) scale(0.040323)" fill="none" stroke="#ffffff" stroke-width="84" stroke-linecap="round">
<path d="M325,215 C580,30 930,30 1180,215"/>
<path d="M175,530 C420,160 1080,160 1320,530"/>
<path d="M1200,1220 C1280,1040 1290,800 1170,640 C1070,505 920,430 745,430 C470,430 235,650 235,910 C235,1030 310,1095 400,1095 C500,1095 560,1030 575,930 C590,830 650,760 745,760 C870,760 950,850 945,960 C935,1150 760,1320 560,1385"/>
<path d="M400,950 C400,740 560,590 745,590 C960,590 1100,760 1100,950 C1100,1130 1010,1280 910,1370"/>
<path d="M745,900 C745,1080 620,1225 325,1225"/>
</g>
<rect x="232" y="2072" width="33" height="32.6" rx="3.4" fill="#ffffff"/>
<rect x="246.2" y="2080.9" width="38" height="38" rx="6" fill="#3a3e48"/>
<rect x="249.6" y="2084.3" width="32.4" height="32.9" rx="3.4" fill="#ffffff"/>
<path fill="#ffffff" d="M234.5,2174 H249.5 L256.5,2179.4 H277.5 a2.5,2.5 0 0 1 2.5,2.5 V2211.7 a2.5,2.5 0 0 1 -2.5,2.5 H234.5 a2.5,2.5 0 0 1 -2.5,-2.5 V2176.5 a2.5,2.5 0 0 1 2.5,-2.5Z"/>
<path fill="#3a3e48" d="M235.8,2178.4 H248 L252.7,2181.8 L248,2185.2 H235.8Z"/>
<circle cx="267.5" cy="2193.8" r="3.3" fill="#3a3e48"/><path fill="#3a3e48" d="M259.6,2209 C259.6,2203.5 263,2200 267.7,2200 C272.4,2200 276,2203.5 276,2209 Z"/>
<path fill="#ffffff" stroke="#ffffff" stroke-width="0.8" stroke-linejoin="round" d="M251.39,2277.01 L252.11,2270.42 L259.89,2270.42 L260.61,2277.01 L264.75,2278.73 L269.93,2274.58 L275.42,2280.07 L271.27,2285.25 L272.99,2289.39 L279.58,2290.11 L279.58,2297.89 L272.99,2298.61 L271.27,2302.75 L275.42,2307.93 L269.93,2313.42 L264.75,2309.27 L260.61,2310.99 L259.89,2317.58 L252.11,2317.58 L251.39,2310.99 L247.25,2309.27 L242.07,2313.42 L236.58,2307.93 L240.73,2302.75 L239.01,2298.61 L232.42,2297.89 L232.42,2290.11 L239.01,2289.39 L240.73,2285.25 L236.58,2280.07 L242.07,2274.58 L247.25,2278.73Z"/>
<circle cx="256" cy="2294" r="9" fill="#3a3e48"/>
<circle cx="3199.4" cy="241.5" r="12.9" fill="none" stroke="#ffffff" stroke-width="2.6"/>
<path fill="#ffffff" d="M3192,232.5 l5,-2.8 4,0.6 1.6,2.4 -3,1.6 -2.6,0.4 -1.4,2.2 2.2,1.6 3,0.4 2.4,1.8 1.4,3 -1.6,2.8 -2.2,1.6 -0.8,3.6 -1.8,1.4 -0.8,-4.6 -1.2,-3.2 0.4,-2.8 -2.4,-2 -2.6,-3.2 -1.2,-3.2 z M3205,231 l4,3 2,4.5 -2.5,-1 -1.5,-3 -2.5,-1.5z"/>
<circle cx="3413.8" cy="241.9" r="16.6" fill="none" stroke="#ffffff" stroke-width="3"/>
<circle cx="3413.8" cy="233.6" r="1.9" fill="#ffffff"/><rect x="3412.4" y="238" width="2.8" height="13.4" fill="#ffffff"/>
<circle cx="972.7" cy="436.9" r="9.7" fill="none" stroke="#d0d3d9" stroke-width="2.7"/><path d="M980,443.9 L990,454" stroke="#d0d3d9" stroke-width="3" stroke-linecap="butt"/>
<path fill="#e8e8e9" d="M3795.4,226.7 H3806.8 a3.4,3.4 0 0 1 2.4,1 L3817,235.5 a3.4,3.4 0 0 1 1,2.4 V255.6 a3.4,3.4 0 0 1 -3.4,3.4 H3795.4 a3.4,3.4 0 0 1 -3.4,-3.4 V230.1 a3.4,3.4 0 0 1 3.4,-3.4Z"/>
<circle cx="3804.1" cy="235.1" r="2.35" fill="#393d47"/>
<path fill="#393d47" d="M3799.4,240.4 H3808.6 V249.7 H3810.1 V252.9 H3799.4 V249.7 H3802.6 V243.5 H3799.4Z"/>
<path fill="#e8e8e9" d="M3883.5,228.8 H3896.5 C3902.5,228.8 3907,233.6 3907,239.8 C3907,243 3905.8,245.6 3903.9,247.5 L3903.4,254.4 a1,1 0 0 1 -1.5,0.8 L3894.5,250.9 H3883.5 C3877.5,250.9 3873,246 3873,239.8 C3873,233.6 3877.5,228.8 3883.5,228.8Z"/>
<circle cx="3881.8" cy="240.2" r="1.9" fill="#393d47"/><circle cx="3889.9" cy="240.2" r="1.9" fill="#393d47"/><circle cx="3897.8" cy="240.2" r="1.9" fill="#393d47"/>
</svg>
</div>
</body></html>
